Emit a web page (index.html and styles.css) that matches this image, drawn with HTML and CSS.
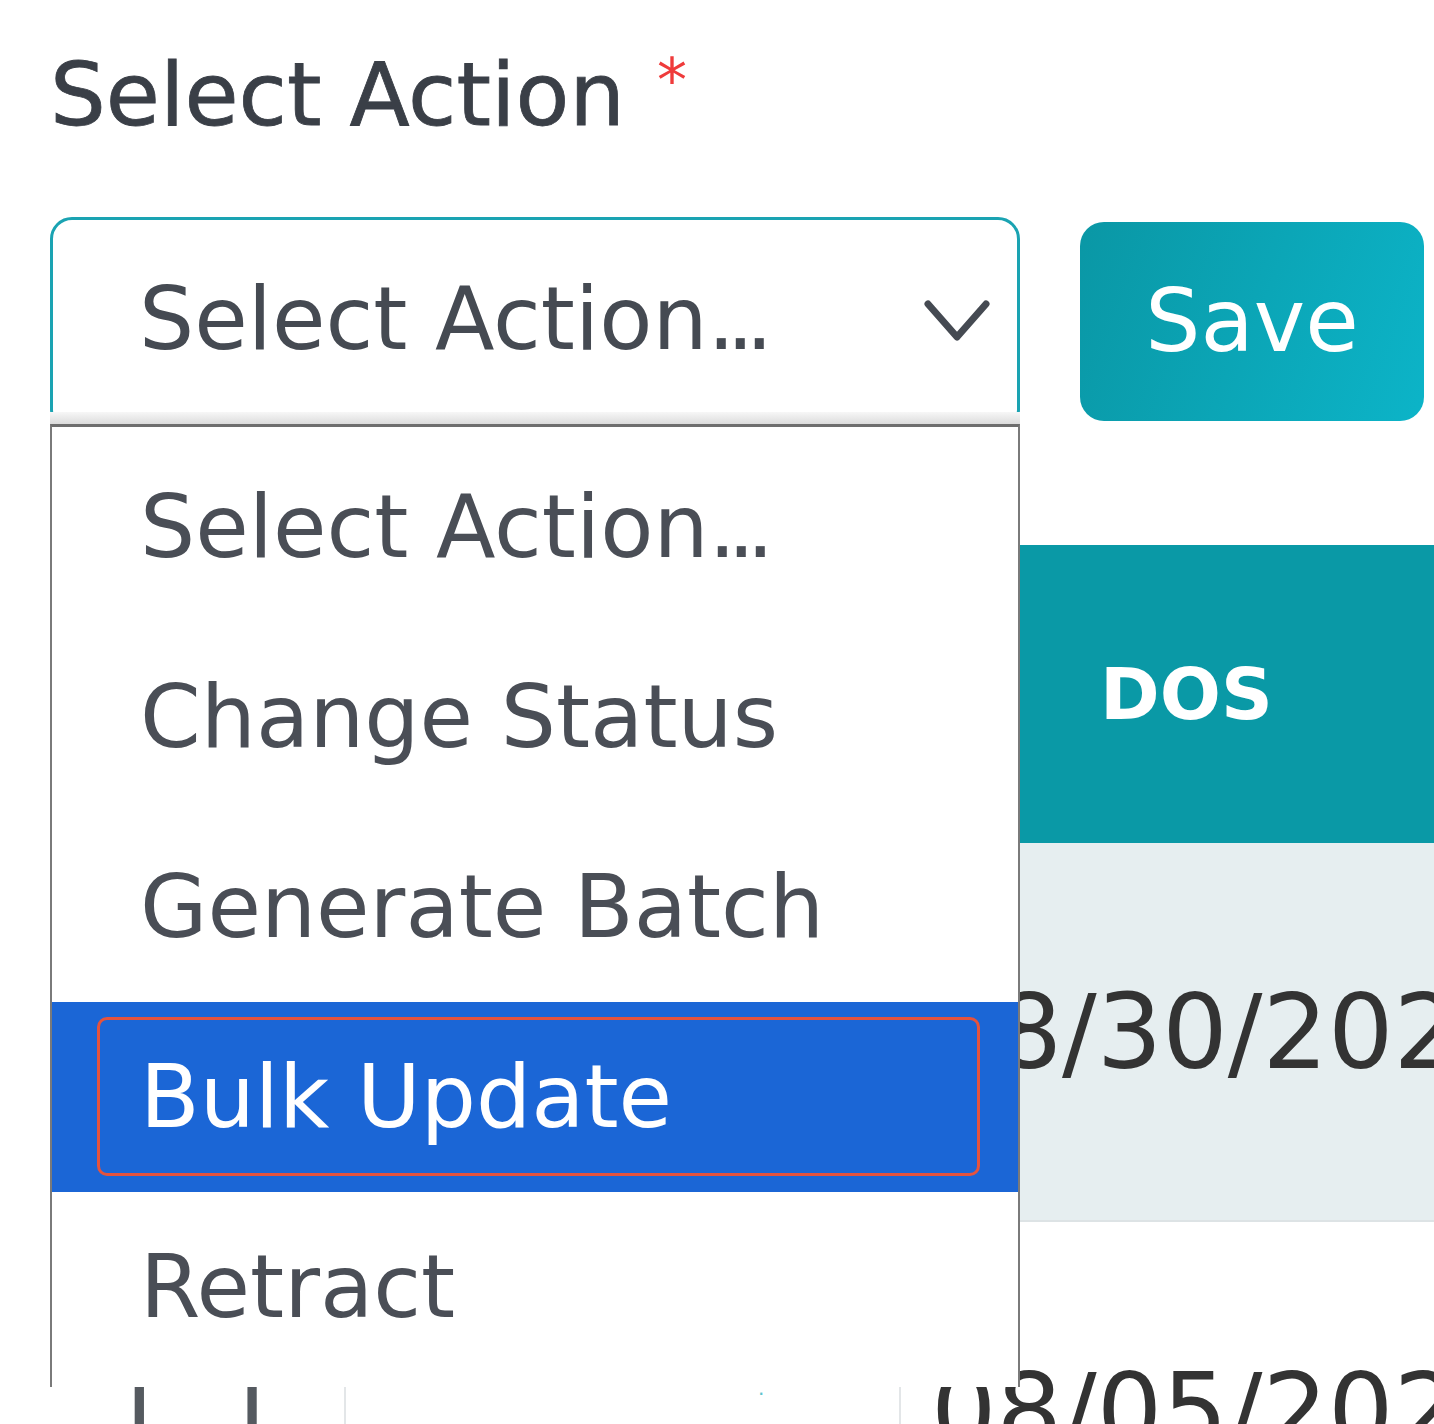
FILE: index.html
```html
<!DOCTYPE html>
<html lang="en">
<head>
<meta charset="utf-8">
<title>Select Action</title>
<link rel="stylesheet" href="styles.css">
</head>
<body>
<div class="page">
  <div class="label">Select Action <span class="req">*</span></div>
  <div class="controls">
    <div class="select">
      <span class="select-text">Select Action<span class="dots">...</span></span>
      <svg class="chev" width="70" height="50" viewBox="0 0 70 50"><polyline points="6,7 35,40 64,7" fill="none" stroke="#454a52" stroke-width="7" stroke-linecap="round" stroke-linejoin="round"/></svg>
      <ul class="dropdown">
        <li class="opt">Select Action<span class="dots">...</span></li>
        <li class="opt">Change Status</li>
        <li class="opt">Generate Batch</li>
        <li class="opt active">Bulk Update</li>
        <li class="opt">Retract</li>
        <li class="opt">Void</li>
      </ul>
    </div>
    <button class="save">Save</button>
  </div>
  <table class="grid">
    <thead>
      <tr><th class="c1"></th><th class="c2"></th><th class="c3">DOS</th></tr>
    </thead>
    <tbody>
      <tr class="odd"><td class="c1"></td><td class="c2"></td><td class="c3">08/30/2025</td></tr>
      <tr><td class="c1"><span class="g1">l</span><span class="g2">l</span></td><td class="c2"><span class="link">.</span></td><td class="c3">08/05/2025</td></tr>
    </tbody>
  </table>
</div>
</body>
</html>
```

FILE: styles.css
```css
html, body {
  margin: 0;
  padding: 0;
  overflow: hidden;
  background: #ffffff;
}
body {
  width: 1434px;
  height: 1424px;
  font-family: "DejaVu Sans", "Noto Sans", sans-serif;
}
.page {
  padding: 36px 0 0 50px;
}
.label {
  font-size: 88px;
  line-height: 88px;
  height: 88px;
  color: #3a3f47;
  -webkit-text-stroke: 0.8px #3a3f47;
  white-space: nowrap;
}
.req {
  color: #ef3b3b;
  -webkit-text-stroke: 0;
  font-size: 60px;
  vertical-align: 24px;
  margin-left: 4px;
}
.controls {
  display: flex;
  align-items: flex-start;
  gap: 60px;
  margin-top: 93px;
}
.select {
  position: relative;
  box-sizing: border-box;
  width: 970px;
  height: 215px;
  border: 3px solid #1aa3b2;
  border-radius: 22px;
  display: flex;
  align-items: flex-start;
  padding: 0 25px 0 86px;
  background: #fff;
}
.select::after {
  content: "";
  position: absolute;
  left: -3px;
  top: 192px;
  width: 970px;
  height: 12px;
  background: linear-gradient(to bottom, #f7f7f7, #dcdcdc);
  z-index: 4;
}
.select-text {
  flex: 1;
  margin-top: 56px;
  font-size: 87px;
  line-height: 87px;
  color: #454a52;
  white-space: nowrap;
}
.dots {
  letter-spacing: -0.1em;
}
.chev {
  margin-top: 77px;
  flex: none;
}
.dropdown {
  position: absolute;
  left: -3px;
  top: 204px;
  box-sizing: border-box;
  width: 970px;
  height: 963px;
  margin: 0;
  padding: 5px 0 0 0;
  list-style: none;
  background: #fff;
  border-top: 3px solid #6e6e6e;
  border-left: 2px solid #7a7a7a;
  border-right: 2px solid #7a7a7a;
  overflow: hidden;
  z-index: 5;
}
.opt {
  position: relative;
  height: 190px;
  line-height: 190px;
  font-size: 87px;
  padding-left: 88px;
  color: #4a4e56;
  white-space: nowrap;
}
.opt.active {
  background: #1b66d6;
  color: #ffffff;
}
.opt.active::after {
  content: "";
  position: absolute;
  left: 45px;
  top: 15px;
  width: 883px;
  height: 159px;
  box-sizing: border-box;
  border: 3px solid #e5533d;
  border-radius: 10px;
}
.save {
  margin-top: 5px;
  width: 344px;
  height: 199px;
  border: none;
  border-radius: 24px;
  background: linear-gradient(110deg, #0a97a5 0%, #0cb4c8 100%);
  color: #ffffff;
  font-family: "DejaVu Sans", sans-serif;
  font-size: 87px;
  line-height: 87px;
  padding: 0;
  flex: none;
}
.grid {
  margin-top: 113px;
  width: 1500px;
  border-collapse: collapse;
  table-layout: fixed;
}
.grid th {
  height: 298px;
  background: #0a99a6;
  color: #ffffff;
  font-weight: bold;
  font-size: 72px;
  text-align: left;
  vertical-align: middle;
  padding: 0;
}
.grid .c1 { width: 295px; }
.grid .c2 { width: 555px; }
.grid th.c3 { padding-left: 200px; }
.grid td {
  height: 377px;
  padding: 0;
  vertical-align: middle;
  font-size: 103px;
  color: #333333;
  border-left: 2px solid #e3e6e8;
  border-bottom: 2px solid #dde3e5;
  white-space: nowrap;
}
.grid td.c3 { padding-left: 30px; }
.grid td.c1 { padding-left: 75px; border-left: none; color: #555a60; }
.grid td.c2 { padding-left: 412px; }
.grid tr.odd td { background: #e6eef0; }
.g2 { margin-left: 84px; }
.link { color: #5fc3cc; font-size: 20px; vertical-align: 52px; }
```
